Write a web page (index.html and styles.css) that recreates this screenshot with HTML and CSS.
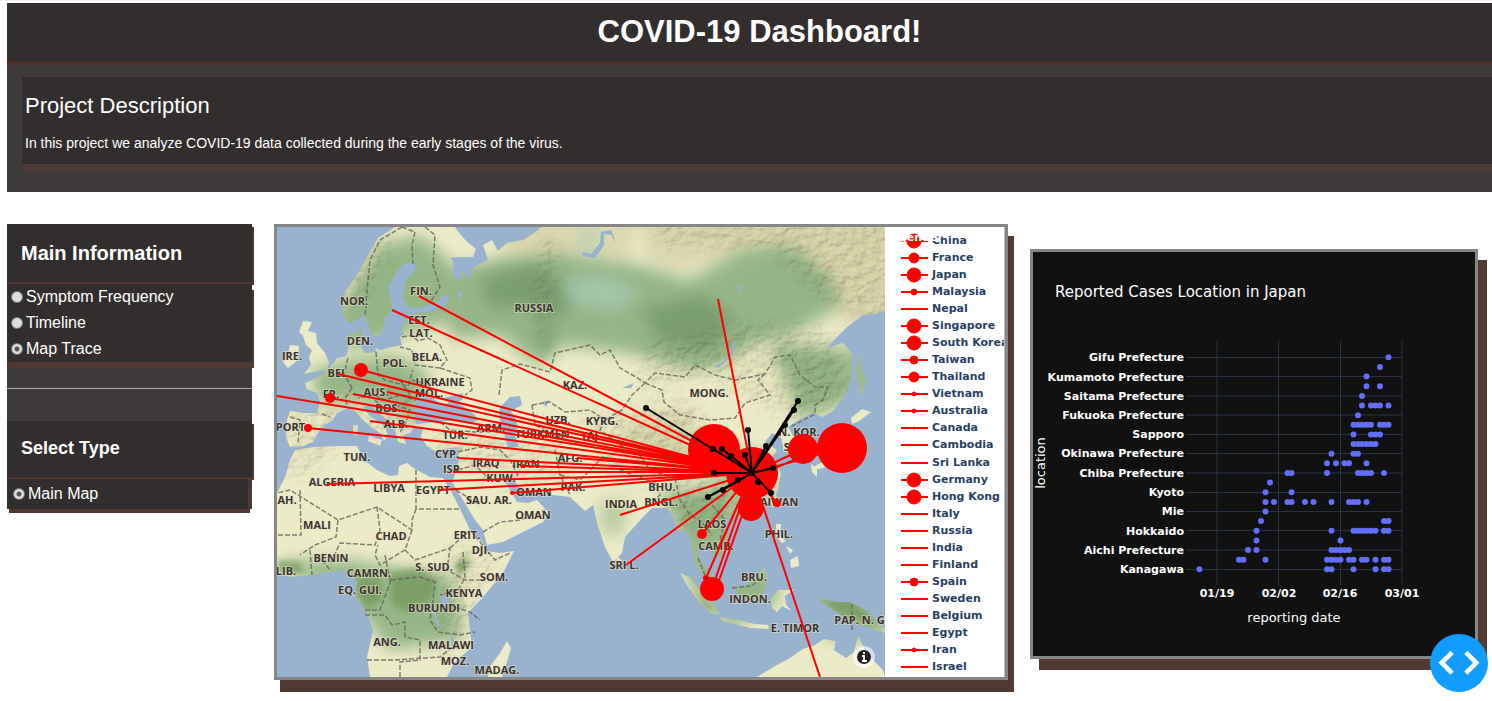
FILE: index.html
```html
<!DOCTYPE html>
<html lang="en">
<head>
<meta charset="utf-8">
<title>COVID-19 Dashboard</title>
<link rel="stylesheet" href="styles.css">
</head>
<body>
<header class="banner">
  <h1 class="banner-title">COVID-19 Dashboard!</h1>
  <section class="about">
    <h2 class="about-title">Project Description</h2>
    <p class="about-text">In this project we analyze COVID-19 data collected during the early stages of the virus.</p>
  </section>
</header>

<main class="board">
  <aside class="sidebar">
    <h2 class="side-title">Main Information</h2>
    <div class="options" role="radiogroup" aria-label="Main Information">
      <label class="option"><input class="radio" type="radio" name="info">Symptom Frequency</label>
      <label class="option"><input class="radio" type="radio" name="info">Timeline</label>
      <label class="option"><input class="radio" type="radio" name="info" checked>Map Trace</label>
    </div>
    <hr class="rule">
    <h3 class="side-title side-title-small">Select Type</h3>
    <div class="options options-type" role="radiogroup" aria-label="Select Type">
      <label class="option"><input class="radio" type="radio" name="type" checked>Main Map</label>
    </div>
  </aside>

  <section class="map-card">
    <svg class="map" viewBox="277 227 608 450" role="img" aria-label="Travel trace map">
      <defs>
        <filter id="soft" x="-30%" y="-30%" width="160%" height="160%"><feGaussianBlur stdDeviation="8"/></filter>
        <filter id="fine" x="-30%" y="-30%" width="160%" height="160%"><feGaussianBlur stdDeviation="3"/></filter>
        <filter id="relief" x="0" y="0" width="100%" height="100%">
          <feTurbulence type="fractalNoise" baseFrequency="0.1 0.14" numOctaves="4" seed="8"/>
          <feDiffuseLighting surfaceScale="3" lighting-color="#fffdf0"><feDistantLight azimuth="225" elevation="52"/></feDiffuseLighting>
        </filter>
        <mask id="ranges" maskUnits="userSpaceOnUse" x="277" y="227" width="608" height="450">
          <path class="range" filter="url(#soft)" d="M655 210H900V335L850 315 810 290 770 250 655 245ZM640 345L740 325 830 325 855 400 790 420 700 375 640 395ZM580 415L690 400 730 450 690 490 600 480ZM365 240L395 220 385 265 365 300 340 315 345 280ZM670 480H770V520L680 530ZM430 430L500 425 570 440 580 480 500 490 430 450ZM455 540L500 560 470 620 445 670 440 580ZM280 410L340 405 380 390 420 400 410 440 290 445ZM270 445H340L310 475H270ZM540 230L560 240 552 300 540 350 535 300Z"/>
        </mask>
        <clipPath id="land">
          <path d="M395 227L378 238 366 258 357 275 346 290 343 303 344 317 349 323 357 320 365 315 368 325 372 335 377 337 383 330 384 318 393 310 391 300 388 287 395 275 403 264 413 262 417 267 406 280 403 297 408 307 420 308 437 302 446 299 445 307 430 312 417 313 407 320 401 327 404 334 400 337 402 345 387 348 377 352 365 353 360 345 362 328 357 331 350 334 348 350 346 356 337 358 332 365 324 373 316 378 305 383 307 389 317 393 320 402 317 413 304 413 290 411 287 420 286 437 290 447 303 446 313 442 318 433 325 425 333 420 337 413 348 408 356 412 362 419 371 427 380 433 384 441 388 436 385 427 376 420 369 415 363 407 370 405 380 414 390 422 395 430 398 442 406 444 403 435 410 433 414 428 423 428 421 437 427 446 435 451 444 449 457 447 459 458 457 470 452 482 463 500 475 520 483 530 487 545 503 542 523 532 543 522 549 513 537 500 528 503 517 502 510 490 502 477 512 478 520 488 537 493 553 495 570 497 585 511 593 505 597 523 605 547 613 562 622 553 625 537 643 517 652 508 667 508 672 515 678 530 688 532 693 550 695 563 702 573 710 588 714 588 711 573 700 560 697 547 708 548 720 558 730 547 727 530 723 520 737 515 760 510 777 493 781 473 772 457 777 450 765 442 772 433 781 438 784 452 793 452 796 441 788 427 800 419 813 413 822 417 833 411 847 393 852 373 852 353 843 343 827 348 836 338 847 327 863 315 875 314 885 311V227H541L537 231 523 240 507 243 498 251 492 240 483 245 488 260 473 267 471 279 462 271 450 258 458 257 473 257 476 249 466 241 457 230 455 227Z"/>
          <path d="M277 493L285 477 290 460 295 450 313 447 337 446 357 446 360 452 358 460 368 463 377 470 390 476 398 475 399 466 407 463 415 469 430 477 443 478 452 493 462 513 470 530 483 543 486 551 500 553 514 551 503 573 483 597 468 613 470 630 472 647 454 663 447 677H370L367 657 373 630 367 613 356 597 357 582 347 570 330 572 310 575 290 577 277 572Z"/>
          <path d="M303 321L312 322 308 331 316 333 317 343 325 353 329 362 327 370 313 372 304 374 311 365 309 357 312 350 306 345 303 336 299 332ZM290 345L299 346 298 360 288 368 283 362 288 355ZM369 436L382 440 380 446 368 441ZM353 425L358 425 357 435 353 434ZM617 556L622 561 620 569 616 565Z"/>
          <path d="M507 641L511 648 507 662 502 677H488L489 668 500 653ZM757 677L775 666 790 658 803 649 815 645 824 639 836 641 834 650 846 658 854 652 858 635 864 648 874 661 883 670 885 677Z"/>
          <path d="M680 573L690 577 700 590 713 602 720 614 711 613 700 603 688 587ZM734 587L746 586 757 575 764 568 768 577 764 592 755 601 738 595ZM720 617L735 619 755 624 768 625 769 629 750 628 722 621ZM771 598L778 590 794 590 785 596 786 604 791 611 782 606 777 612 772 608ZM815 596L826 600 838 602 850 602 866 610 876 620 885 629V633L870 628 860 625 842 616 828 607ZM776 524L781 524 780 536 786 541 782 543 776 536ZM786 546L793 550 790 554ZM790 560L798 556 799 566 791 568ZM773 493L777 496 773 508 770 502Z"/>
          <path d="M858 352L862 370 866 380 861 396 858 384 856 366ZM851 418L862 409 871 412 859 421 852 424ZM853 427L853 441 848 454 833 464 820 469 812 468 825 460 840 452 845 440ZM811 464L817 468 817 477 812 472ZM714 515L722 516 719 522 713 521Z"/>
          <path d="M375 348L381 350 377 353Z"/>
        </clipPath>
      </defs>
      <rect class="sea" x="277" y="227" width="608" height="450"/>
      <g clip-path="url(#land)">
        <rect class="ground" x="277" y="227" width="608" height="450"/>
        <g class="bare" filter="url(#soft)">
          <path d="M640 215H900V320L845 325 820 290 790 250 740 255 680 270 650 265Z"/>
          <path d="M490 215H640L630 260 560 255 510 260Z"/>
          <path d="M620 425L690 410 690 470 630 460Z"/>
        </g>
        <g class="woods" filter="url(#soft)">
          <path d="M380 245L420 235 450 260 455 320 400 335 350 350 330 320 360 275Z"/>
          <path d="M450 268L500 258 560 252 640 265 690 280 740 250 790 245 830 275 842 305 790 335 760 340 720 365 690 370 640 355 560 345 545 365 530 360 500 335 450 340Z"/>
          <path d="M770 345L800 345 850 350 850 400 800 420 785 380Z"/>
          <path d="M310 370L350 360 400 355 430 375 420 425 370 400 320 405Z"/>
          <path d="M277 560L350 560 400 568 450 575 460 610 460 640 390 650 350 600Z"/>
          <path d="M660 490L730 490 740 560 690 570ZM680 570L730 630 780 600 770 560ZM800 590H885V640H830Z"/>
          <path d="M600 500L630 500 620 540 600 530ZM700 450L770 450 780 500 720 510Z" opacity=".6"/>
          <path d="M852 345H875V400H852Z"/>
        </g>
        <g class="jungle" filter="url(#fine)">
          <path d="M390 573L420 568 437 580 430 602 410 612 392 605ZM358 578L380 578 382 600 366 610 357 595ZM277 560L300 562 305 574 277 575ZM455 562L468 555 468 570 458 576ZM820 598L850 600 880 625 840 614ZM690 585L718 612 705 610Z"/>
        </g>
        <g class="deep" filter="url(#soft)">
          <path d="M480 278L530 264 580 290 570 310 545 318 525 305 490 308ZM640 310L700 295 735 315 710 350 660 340ZM540 325L555 325 548 352 538 350Z"/>
        </g>
        <g class="wash" filter="url(#soft)">
          <path d="M560 280L600 275 640 290 620 310 570 305Z"/>
          <path d="M575 235L600 225 590 260Z"/>
        </g>
        <g class="relief" mask="url(#ranges)">
          <rect x="277" y="227" width="608" height="450" filter="url(#relief)"/>
        </g>
      </g>
      <g class="sea">
        <path d="M416 424L414 410 417 400 424 392 433 398 441 405 449 403 444 398 456 395 463 393 463 399 457 403 466 408 474 414 478 420 470 424 457 420 437 422Z"/>
        <path d="M500 407L510 397 520 396 522 405 511 411 516 420 518 430 515 435 519 447 508 448 505 437 502 428 499 415Z"/>
        <path d="M714 366L723 362 732 349 735 340 736 347 728 360 718 368Z"/>
        <path d="M582 252L591 254 600 243 601 232 611 230 616 243 611 235 604 234 604 245 595 258 583 256Z"/>
        <path d="M440 295L450 297 447 303 440 302ZM457 290L463 294 459 300ZM453 262L463 270 460 280 453 276ZM542 402L549 400 546 407ZM622 388L634 383 631 388ZM738 287L744 283 740 292ZM440 596L449 594 450 606 441 605ZM434 607L437 620 442 627 438 626 432 612ZM450 632L454 640 452 647Z"/>
      </g>
      <g class="borders">
        <path d="M402 227L380 240 370 260 367 290 365 317M402 227L415 232 412 245 413 264M425 227L435 235 433 265 440 287 430 303M402 337L412 335 418 341 428 338 440 345 447 360 440 368 415 365 412 350 400 347M376 352L378 375 385 380 408 386 413 370M348 358L344 374 352 388M412 380L425 384 415 400 400 395 385 400 375 395 358 398M440 368L470 378 472 390 465 395M352 388L345 398 348 408M290 417L300 420 298 443M322 414L330 417M395 405L410 410 405 425 400 432M440 422L450 430 475 432 500 432"/>
        <path d="M499 395L502 370 520 364 550 372 555 353 590 345 600 355 610 350 620 368 636 377 645 383 655 373 685 377 695 365 715 375 735 380 765 374 775 357 790 355 800 375 815 387 828 387 823 400 815 405 815 414 790 427M645 383L662 390 664 402 680 415 710 420 735 418 745 403 770 395 758 380 765 374M645 383L632 395 622 410 605 420 600 430 620 445 640 455 650 470 675 478M532 405L550 402 565 412 590 410 605 420M532 405L535 425 555 435 580 445 595 435M458 452L480 447 500 450 510 460 520 480M458 470L475 465 490 480 502 478M555 450L560 475 570 495M560 475L580 480 595 465 605 455M620 470L655 483 660 495 650 505M675 478L680 500 690 515 700 520 712 535M712 505L725 520 720 540M483 532L500 522 520 520 545 510M456 490L480 505"/>
        <path d="M416 470V509H459M416 509L412 520 412 530 377 507 338 520 290 490 277 493M300 490L301 535H277M338 520L336 537 315 545 300 555M377 507L380 530 375 545 340 543 330 565M412 530L405 550 380 565 375 555 378 545M405 550L415 560 450 548 447 570 465 580 480 580M450 548L470 530 495 560 510 553M391 580L420 577 435 582 433 600 430 620 438 632 460 635 475 632M365 615H385L392 625 405 622 405 637 420 640 420 660 400 662V677M367 660H395L440 657 455 645M310 550L312 575M322 560L330 570M391 580L380 610 365 610M385 555L390 580M463 552L465 578 458 590 440 595"/>
        <path d="M852 604V630M698 558L705 575M732 588L752 586 760 578M448 605L470 612 480 620M400 380L410 395M375 400L385 412 400 410"/>
      </g>
      <g class="places" text-anchor="middle">
        <text x="354" y="305">NOR.</text><text x="421" y="295">FIN.</text><text x="534" y="312">RUSSIA</text>
        <text x="419" y="324">EST.</text><text x="421" y="337">LAT.</text><text x="360" y="345">DEN.</text>
        <text x="292" y="360">IRE.</text><text x="395" y="367">POL.</text><text x="427" y="361">BELA.</text>
        <text x="339" y="377">BEL.</text><text x="440" y="386">UKRAINE</text><text x="429" y="397">MOL.</text>
        <text x="331" y="398">FR.</text><text x="376" y="396">AUS.</text><text x="388" y="412">BOS.</text>
        <text x="396" y="428">ALB.</text><text x="292" y="431">PORT.</text><text x="357" y="461">TUN.</text>
        <text x="455" y="439">TUR.</text><text x="491" y="432">ARM.</text><text x="544" y="438">TURKMEN.</text>
        <text x="558" y="424">UZB.</text><text x="575" y="389">KAZ.</text><text x="602" y="425">KYRG.</text>
        <text x="591" y="440">TAJ.</text><text x="709" y="397">MONG.</text><text x="799" y="436">N. KOR.</text>
        <text x="803" y="451">S. KOR.</text><text x="447" y="458">CYP.</text><text x="453" y="473">ISR.</text>
        <text x="486" y="467">IRAQ</text><text x="526" y="468">IRAN</text><text x="570" y="462">AFG.</text>
        <text x="501" y="482">KUW.</text><text x="573" y="491">PAK.</text><text x="332" y="486">ALGERIA</text>
        <text x="389" y="492">LIBYA</text><text x="433" y="494">EGYPT</text><text x="489" y="504">SAU. AR.</text>
        <text x="534" y="496">OMAN</text><text x="533" y="519">OMAN</text><text x="287" y="504">AH.</text>
        <text x="317" y="529">MALI</text><text x="391" y="540">CHAD</text><text x="467" y="539">ERIT.</text>
        <text x="481" y="554">DJI.</text><text x="331" y="562">BENIN</text><text x="286" y="575">LIB.</text>
        <text x="369" y="577">CAMRN.</text><text x="434" y="571">S. SUD.</text><text x="494" y="581">SOM.</text>
        <text x="360" y="594">EQ. GUI.</text><text x="464" y="597">KENYA</text><text x="434" y="612">BURUNDI</text>
        <text x="387" y="646">ANG.</text><text x="451" y="649">MALAWI</text><text x="455" y="665">MOZ.</text>
        <text x="497" y="674">MADAG.</text><text x="621" y="508">INDIA</text><text x="662" y="491">BHU.</text>
        <text x="661" y="506">BNGL.</text><text x="624" y="569">SRI L.</text><text x="712" y="528">LAOS</text>
        <text x="716" y="550">CAMB.</text><text x="776" y="506">TAIWAN</text><text x="779" y="538">PHIL.</text>
        <text x="754" y="581">BRU.</text><text x="750" y="603">INDON.</text><text x="795" y="632">E. TIMOR</text>
        <text x="867" y="624">PAP. N. GUI.</text>
      </g>
      <path class="trace" d="M419 296L752 473M392 310L752 473M338 374L752 473M361 370L752 473M330 398L752 473M277 396L752 473M370 421L752 473M353 394L752 473M387 392L752 473M308 428L752 473M458 458L752 473M453 472H752M523 466L752 473M327 484L752 473M438 490L752 473M512 493L752 473M620 515L752 473M626 565L752 473M718 299L752 473L820 677M702 534L752 473L706 578M719 547L752 473L712 589M716 589L757 473M777 503L752 473M842 448L752 473L803 449M803 456L752 478M577 458L752 473"/>
      <g class="cases">
        <circle cx="714" cy="450" r="26"/><circle cx="752" cy="473" r="26"/><circle cx="751" cy="508" r="13"/>
        <circle cx="803" cy="449" r="15"/><circle cx="842" cy="448" r="25"/><circle cx="712" cy="589" r="12"/>
        <circle cx="702" cy="534" r="5"/><circle cx="777" cy="503" r="4"/><circle cx="361" cy="370" r="7"/>
        <circle cx="330" cy="398" r="5"/><circle cx="308" cy="428" r="4"/><circle cx="706" cy="578" r="3"/>
        <circle cx="523" cy="466" r="2"/><circle cx="512" cy="493" r="2"/>
      </g>
      <path class="china-line" d="M646 408L713 449 752 473 722 449M731 456L752 473 745 455M748 430L752 473 766 446M785 425L752 473 798 401M794 410L752 473 773 468M714 473H752L723 490M708 497L752 473 771 493"/>
      <path class="china-dot" d="M646 408h0M713 449h0M722 449h0M731 456h0M745 455h0M748 430h0M766 446h0M785 425h0M794 410h0M798 401h0M773 468h0M714 473h0M738 480h0M723 490h0M708 497h0M758 482h0M771 493h0M752 473h0"/>
      <circle class="info-halo" cx="864" cy="657" r="11"/>
      <circle class="info-disc" cx="864" cy="657" r="7"/>
      <path class="info-mark" d="M864 652v2M862 656h2v5M862 661h5"/>
    </svg>
    <div class="legend">
      <span class="legend-title">gender</span>
      <ul class="legend-list">
        <li class="entry"><svg class="key" viewBox="0 0 27 16"><path d="M0 8H27"/><circle cx="13" cy="8" r="7"/></svg>China</li>
        <li class="entry"><svg class="key" viewBox="0 0 27 16"><path d="M0 8H27"/><circle cx="13" cy="8" r="5"/></svg>France</li>
        <li class="entry"><svg class="key" viewBox="0 0 27 16"><path d="M0 8H27"/><circle cx="13" cy="8" r="7"/></svg>Japan</li>
        <li class="entry"><svg class="key" viewBox="0 0 27 16"><path d="M0 8H27"/><circle cx="13" cy="8" r="3"/></svg>Malaysia</li>
        <li class="entry"><svg class="key" viewBox="0 0 27 16"><path d="M0 8H27"/></svg>Nepal</li>
        <li class="entry"><svg class="key" viewBox="0 0 27 16"><path d="M0 8H27"/><circle cx="13" cy="8" r="7"/></svg>Singapore</li>
        <li class="entry"><svg class="key" viewBox="0 0 27 16"><path d="M0 8H27"/><circle cx="13" cy="8" r="7"/></svg>South Korea</li>
        <li class="entry"><svg class="key" viewBox="0 0 27 16"><path d="M0 8H27"/><circle cx="13" cy="8" r="4"/></svg>Taiwan</li>
        <li class="entry"><svg class="key" viewBox="0 0 27 16"><path d="M0 8H27"/><circle cx="13" cy="8" r="5"/></svg>Thailand</li>
        <li class="entry"><svg class="key" viewBox="0 0 27 16"><path d="M0 8H27"/><circle cx="13" cy="8" r="2"/></svg>Vietnam</li>
        <li class="entry"><svg class="key" viewBox="0 0 27 16"><path d="M0 8H27"/><circle cx="13" cy="8" r="2"/></svg>Australia</li>
        <li class="entry"><svg class="key" viewBox="0 0 27 16"><path d="M0 8H27"/><circle cx="13" cy="8" r="1"/></svg>Canada</li>
        <li class="entry"><svg class="key" viewBox="0 0 27 16"><path d="M0 8H27"/></svg>Cambodia</li>
        <li class="entry"><svg class="key" viewBox="0 0 27 16"><path d="M0 8H27"/></svg>Sri Lanka</li>
        <li class="entry"><svg class="key" viewBox="0 0 27 16"><path d="M0 8H27"/><circle cx="13" cy="8" r="7"/></svg>Germany</li>
        <li class="entry"><svg class="key" viewBox="0 0 27 16"><path d="M0 8H27"/><circle cx="13" cy="8" r="7"/></svg>Hong Kong</li>
        <li class="entry"><svg class="key" viewBox="0 0 27 16"><path d="M0 8H27"/></svg>Italy</li>
        <li class="entry"><svg class="key" viewBox="0 0 27 16"><path d="M0 8H27"/></svg>Russia</li>
        <li class="entry"><svg class="key" viewBox="0 0 27 16"><path d="M0 8H27"/></svg>India</li>
        <li class="entry"><svg class="key" viewBox="0 0 27 16"><path d="M0 8H27"/></svg>Finland</li>
        <li class="entry"><svg class="key" viewBox="0 0 27 16"><path d="M0 8H27"/><circle cx="13" cy="8" r="4"/></svg>Spain</li>
        <li class="entry"><svg class="key" viewBox="0 0 27 16"><path d="M0 8H27"/></svg>Sweden</li>
        <li class="entry"><svg class="key" viewBox="0 0 27 16"><path d="M0 8H27"/></svg>Belgium</li>
        <li class="entry"><svg class="key" viewBox="0 0 27 16"><path d="M0 8H27"/></svg>Egypt</li>
        <li class="entry"><svg class="key" viewBox="0 0 27 16"><path d="M0 8H27"/><circle cx="13" cy="8" r="2"/></svg>Iran</li>
        <li class="entry"><svg class="key" viewBox="0 0 27 16"><path d="M0 8H27"/></svg>Israel</li>
      </ul>
    </div>
  </section>

  <section class="chart-card">
    <svg class="chart" viewBox="1033 252 442 404" role="img" aria-label="Reported Cases Location in Japan">
      <text class="chart-title" x="1055" y="297">Reported Cases Location in Japan</text>
      <path class="grid-row" d="M1186 357.500H1402M1186 376.500H1402M1186 396H1402M1186 415H1402M1186 434.500H1402M1186 453.500H1402M1186 473H1402M1186 492.500H1402M1186 511.500H1402M1186 530.500H1402M1186 550H1402M1186 569.500H1402"/>
      <path class="grid-col" d="M1217 341V585M1278.500 341V585M1340.500 341V585M1402 341V585"/>
      <g class="ticks" text-anchor="end">
        <text x="1184" y="361">Gifu Prefecture</text><text x="1184" y="381">Kumamoto Prefecture</text>
        <text x="1184" y="400">Saitama Prefecture</text><text x="1184" y="419">Fukuoka Prefecture</text>
        <text x="1184" y="438">Sapporo</text><text x="1184" y="457">Okinawa Prefecture</text>
        <text x="1184" y="477">Chiba Prefecture</text><text x="1184" y="496">Kyoto</text>
        <text x="1184" y="515">Mie</text><text x="1184" y="535">Hokkaido</text>
        <text x="1184" y="554">Aichi Prefecture</text><text x="1184" y="573">Kanagawa</text>
      </g>
      <g class="ticks" text-anchor="middle">
        <text x="1217" y="597">01/19</text><text x="1279" y="597">02/02</text><text x="1340" y="597">02/16</text><text x="1402" y="597">03/01</text>
      </g>
      <text class="axis" text-anchor="middle" x="1294" y="622">reporting date</text>
      <text class="axis" text-anchor="middle" transform="translate(1045 463) rotate(-90)">location</text>
      <path class="points" d="M1199.400 569.300h0M1327 569.300h0M1331.500 569.300h0M1353.500 569.300h0M1375.500 569.300h0M1384 569.300h0M1388.500 569.300h0
        M1239 559.700h0M1243.500 559.700h0M1265.500 559.700h0M1327 559.700h0M1331.500 559.700h0M1336 559.700h0M1340.500 559.700h0M1349 559.700h0M1353.500 559.700h0M1362 559.700h0M1366.500 559.700h0M1375.500 559.700h0M1384 559.700h0M1388.500 559.700h0
        M1248 550h0M1256.500 550h0M1331.500 550h0M1336 550h0M1340.500 550h0M1344.500 550h0M1349 550h0
        M1256.500 540.500h0M1340.500 540.500h0
        M1256.500 530.800h0M1331.500 530.800h0M1353.500 530.800h0M1358 530.800h0M1362 530.800h0M1366.500 530.800h0M1371 530.800h0M1375.500 530.800h0M1384 530.800h0M1388.500 530.800h0
        M1261 521h0M1384 521h0M1388.500 521h0
        M1265.500 511.500h0
        M1265.500 501.900h0M1274 501.900h0M1287.500 501.900h0M1291.500 501.900h0M1305 501.900h0M1313.500 501.900h0M1331.500 501.900h0M1349 501.900h0M1353.500 501.900h0M1358 501.900h0M1366.500 501.900h0
        M1265.500 492.300h0M1291.500 492.300h0
        M1270 482.600h0
        M1287.500 473h0M1291.500 473h0M1327 473h0M1358 473h0M1362 473h0M1366.500 473h0M1371 473h0M1384 473h0
        M1327 463.300h0M1336 463.300h0M1344.500 463.300h0M1349 463.300h0M1366.500 463.300h0
        M1331.500 453.700h0M1353.500 453.700h0M1358 453.700h0
        M1353.500 444h0M1358 444h0M1362 444h0M1366.500 444h0M1371 444h0M1375.500 444h0
        M1353.500 434.500h0M1371 434.500h0M1375.500 434.500h0M1380 434.500h0
        M1353.500 424.800h0M1358 424.800h0M1362 424.800h0M1366.500 424.800h0M1371 424.800h0M1380 424.800h0M1384 424.800h0M1388.500 424.800h0
        M1358 415.200h0
        M1362 405.500h0M1371 405.500h0M1375.500 405.500h0M1380 405.500h0M1388.500 405.500h0
        M1362 396h0
        M1366.500 386.200h0M1380 386.200h0
        M1366.500 376.600h0
        M1380 367h0
        M1388.500 357.300h0"/>
    </svg>
  </section>
</main>

<button class="devtools" type="button" aria-label="Developer tools">
  <svg class="devtools-icon" viewBox="0 0 40 24"><path d="M14 3L5 12 14 21M26 3L35 12 26 21"/></svg>
</button>
</body>
</html>
```
FILE: styles.css
```css
* { box-sizing: border-box; }

body {
  margin: 0;
  padding: 2px 0 0 7px;
  min-height: 100vh;
  overflow: hidden;
  background: #fff;
  border-top: 1px solid #eee;
  font-family: "Liberation Sans", Arial, sans-serif;
  color: #fff;
}

h1, h2, h3, p, ul { margin: 0; padding: 0; }

.banner {
  padding-bottom: 28px;
  background: #3e3a39;
}

.banner-title {
  position: relative;
  padding: 10px 0 10px 20px;
  background: #322e2d;
  box-shadow: 0 4px #4b2e2a;
  font-size: 31px;
  line-height: 38px;
  text-align: center;
}

.about {
  margin: 16px 0 0 15px;
  padding: 14px 3px 9px;
  background: #322e2d;
  box-shadow: 2px 7px #4e3a37;
}

.about-title {
  margin-bottom: 11px;
  font-size: 22px;
  font-weight: 400;
  line-height: 30px;
}

.about-text {
  font-size: 14px;
  line-height: 23px;
}

.board {
  display: grid;
  grid-template-columns: 245fr 734fr 448fr;
  gap: 22px;
  align-items: start;
  padding: 32px 14px 0 0;
}

.sidebar { background: #3e3a39; }

.side-title {
  padding: 14px;
  background: #322e2d;
  box-shadow: 2px 3px #4f3832;
  font-size: 20px;
  line-height: 30px;
}

.side-title-small {
  padding: 12px 14px 14px;
  font-size: 18px;
}

.options {
  position: relative;
  margin-top: 2px;
  padding: 0 4px;
  background: #322e2d;
  box-shadow: 2px 6px #4f3832;
}

.options-type {
  margin: 2px 4px 0 0;
  padding: 2px 6px;
  box-shadow: 2px 4px #4f3832;
}

.option {
  display: flex;
  align-items: center;
  gap: 3px;
  font-size: 16px;
  line-height: 26px;
}

.radio {
  appearance: none;
  width: 12px;
  height: 12px;
  margin: 0;
  border: 1px solid #777;
  border-radius: 50%;
  background: #ddd;
}

.radio:checked { background: radial-gradient(circle, #555 0 2px, #ddd 3px); }

.rule {
  margin: 26px 0 32px;
  border: 0;
  border-top: 1px solid #aaa;
}

.map-card {
  display: grid;
  grid-template-columns: 608fr 120fr;
  border: 3px solid #868686;
  background: #fff;
  box-shadow: 6px 12px #523a34;
}

.map { display: block; width: 100%; }

.sea { fill: #99b2cd; }
.ground { fill: #ecebc8; }
.woods { fill: #8db181; opacity: .9; }
.deep { fill: #6f9468; opacity: .7; }
.jungle { fill: #72985a; opacity: .75; }
.wash { fill: #a9cdb9; opacity: .7; }
.bare { fill: #dcd8b0; }
.range { fill: #fff; }
.relief { mix-blend-mode: multiply; opacity: .4; }

.borders {
  fill: none;
  stroke: #65645a;
  stroke-width: 1.5;
  stroke-dasharray: 5 2;
  opacity: .8;
}

.places {
  fill: #3b322d;
  stroke: #e8e6cf;
  stroke-width: 2;
  stroke-opacity: .5;
  paint-order: stroke;
  font: 700 11px "Open Sans", "Noto Sans", sans-serif;
}

.trace { fill: none; stroke: #f00; stroke-width: 2; }
.cases { fill: #f00; }
.china-line { fill: none; stroke: #000; stroke-width: 2; }
.china-dot { stroke: #000; stroke-width: 6; stroke-linecap: round; }
.info-halo { fill: #fff; opacity: .6; }
.info-disc { fill: #222; }
.info-mark { fill: none; stroke: #fff; stroke-width: 2; }

.legend {
  position: relative;
  min-width: 0;
  padding: 5px 1px 1px 16px;
  overflow: hidden;
  border-right: 1px solid #b8c0cc;
  color: #2a3f5f;
  font: bold 11px "DejaVu Sans", Verdana, sans-serif;
}

.legend-title {
  position: absolute;
  z-index: 1;
  top: 4px;
  left: 14px;
  color: #fff;
  line-height: 14px;
}

.legend-list {
  display: grid;
  grid-auto-rows: 1fr;
  height: 100%;
  list-style: none;
}

.entry {
  display: flex;
  align-items: center;
  gap: 4px;
  min-height: 0;
  line-height: 16px;
  white-space: nowrap;
}

.key { flex: none; width: 27px; height: 16px; fill: #f00; stroke: #f00; }
.key path { stroke-width: 2; }

.chart-card {
  margin-top: 25px;
  border: 3px solid #868686;
  background: #111;
  box-shadow: 9px 11px #523a34;
}

.chart { display: block; width: 100%; fill: #fff; font-family: "DejaVu Sans", Verdana, sans-serif; }
.chart-title { font-size: 15px; }
.axis { font-size: 13px; }
.ticks { font-size: 11px; font-weight: 700; }
.grid-row, .grid-col { stroke: #283442; }
.points { stroke: #636efa; stroke-width: 6; stroke-linecap: round; }

.devtools {
  position: fixed;
  right: 4px;
  bottom: 9px;
  display: grid;
  place-items: center;
  width: 58px;
  height: 58px;
  padding: 0;
  border: 0;
  border-radius: 50%;
  background: #119dff;
}

.devtools-icon { width: 46px; fill: none; stroke: #fff; stroke-width: 4; }
```
